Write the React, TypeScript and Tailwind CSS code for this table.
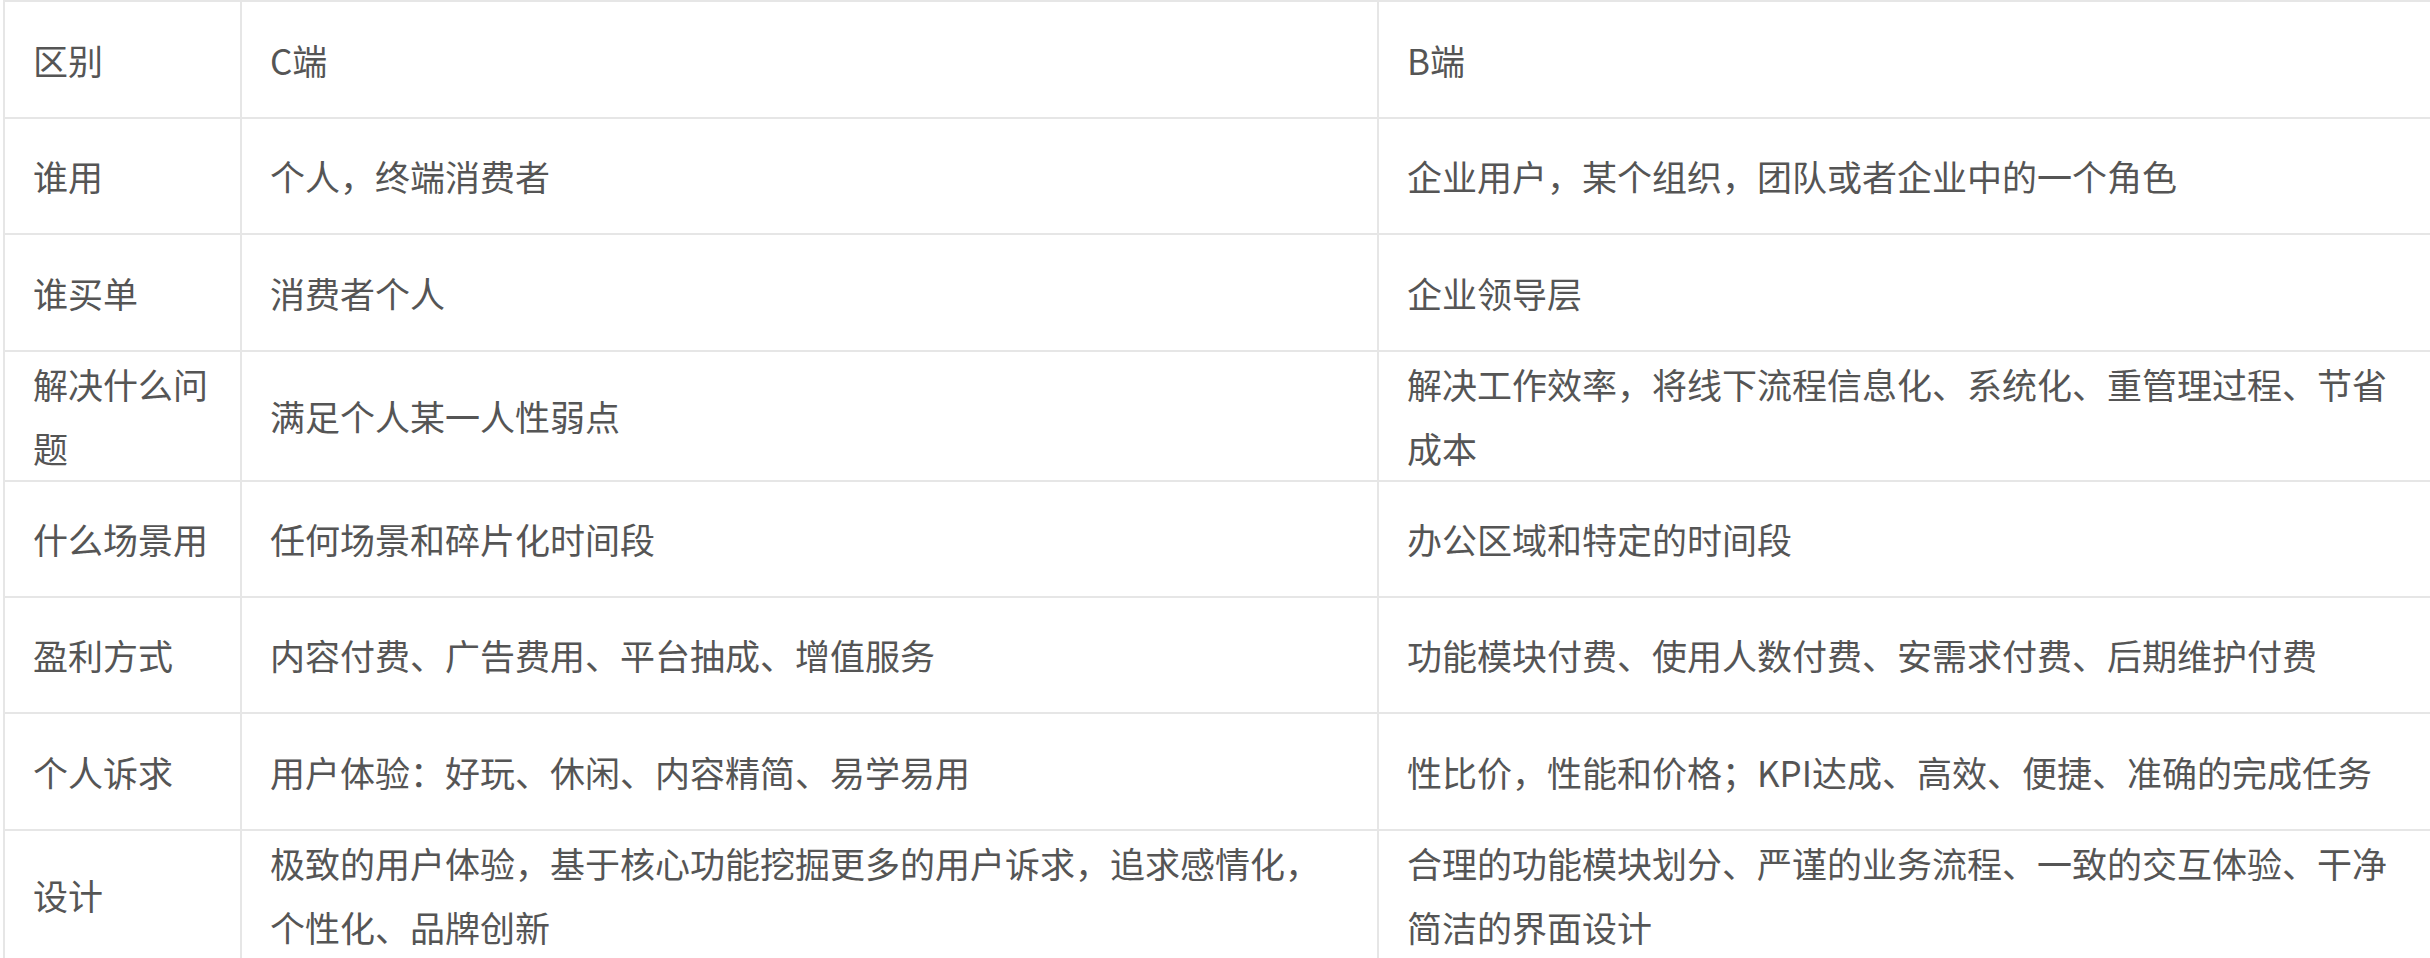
import React from "react"

const rows = [
  { k: "区别", c: "C端", b: "B端", h: "h-[117px]" },
  { k: "谁用", c: "个人，终端消费者", b: "企业用户，某个组织，团队或者企业中的一个角色", h: "h-[116px]" },
  { k: "谁买单", c: "消费者个人", b: "企业领导层", h: "h-[117px]" },
  {
    k: "解决什么问题",
    c: "满足个人某一人性弱点",
    b: "解决工作效率，将线下流程信息化、系统化、重管理过程、节省成本",
    h: "h-[129px]",
  },
  { k: "什么场景用", c: "任何场景和碎片化时间段", b: "办公区域和特定的时间段", h: "h-[116px]" },
  {
    k: "盈利方式",
    c: "内容付费、广告费用、平台抽成、增值服务",
    b: "功能模块付费、使用人数付费、安需求付费、后期维护付费",
    h: "h-[116px]",
  },
  {
    k: "个人诉求",
    c: "用户体验：好玩、休闲、内容精简、易学易用",
    b: "性比价，性能和价格；KPI达成、高效、便捷、准确的完成任务",
    h: "h-[117px]",
  },
  {
    k: "设计",
    c: "极致的用户体验，基于核心功能挖掘更多的用户诉求，追求感情化，个性化、品牌创新",
    b: "合理的功能模块划分、严谨的业务流程、一致的交互体验、干净简洁的界面设计",
    h: "h-[128px]",
  },
]

const cell = "border-2 border-[#e6e6e6] px-[28px] py-0 align-middle text-left font-normal"

export default function App() {
  return (
    <div className="w-[2430px] h-[958px] bg-white pl-[3px] overflow-hidden">
      <table
        className="table-fixed border-collapse w-[2427px] text-[35px] leading-[64px] text-[#555555]"
        style={{ fontFamily: '"Noto Sans CJK SC", "Noto Sans", sans-serif' }}
      >
        <colgroup>
          <col className="w-[237px]" />
          <col className="w-[1137px]" />
          <col className="w-[1053px]" />
        </colgroup>
        <tbody>
          {rows.map((r) => (
            <tr key={r.k} className={r.h}>
              <td className={cell}>{r.k}</td>
              <td className={cell}>{r.c}</td>
              <td className={cell}>{r.b}</td>
            </tr>
          ))}
        </tbody>
      </table>
    </div>
  )
}
